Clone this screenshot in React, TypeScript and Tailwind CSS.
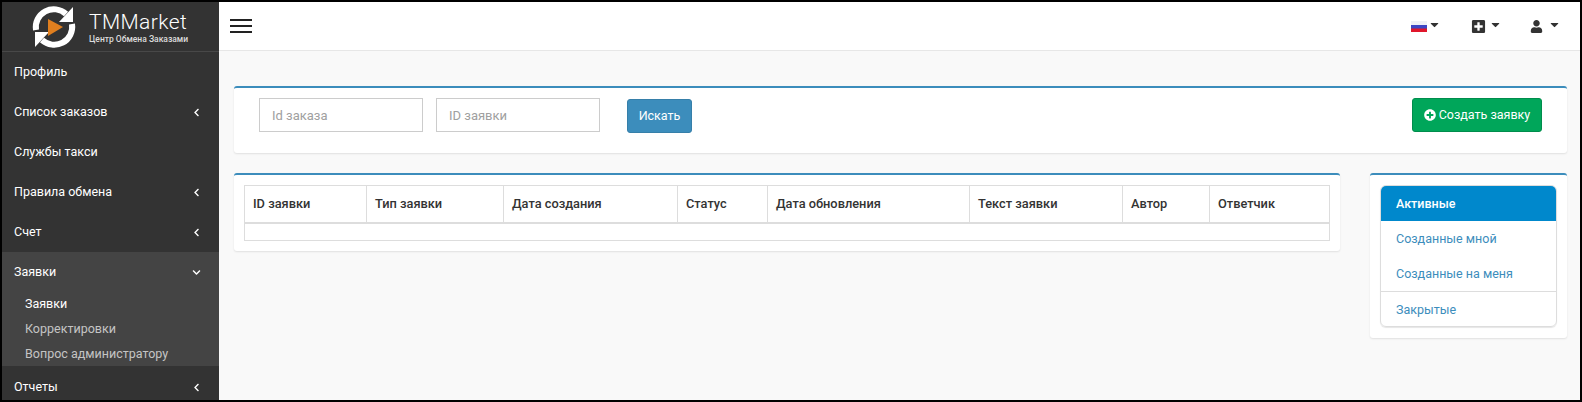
import { FaCaretDown, FaChevronDown, FaChevronLeft, FaPlusCircle, FaPlusSquare, FaUser } from 'react-icons/fa';

const menuTop = ['Профиль', 'Список заказов', 'Службы такси', 'Правила обмена', 'Счет'];
const withArrow = ['Список заказов', 'Правила обмена', 'Счет'];

const columns = [
  { name: 'ID заявки', width: 'w-[122px]' },
  { name: 'Тип заявки', width: 'w-[137px]' },
  { name: 'Дата создания', width: 'w-[174px]' },
  { name: 'Статус', width: 'w-[90px]' },
  { name: 'Дата обновления', width: 'w-[202px]' },
  { name: 'Текст заявки', width: 'w-[153px]' },
  { name: 'Автор', width: 'w-[87px]' },
  { name: 'Ответчик', width: 'w-[120px]' },
];

function Logo() {
  return (
    <svg viewBox="0 0 44 44" className="h-[44px] w-[44px] shrink-0">
      <path d="M4 25 A18 18 0 0 1 34 9" fill="none" stroke="#fff" strokeWidth="6" />
      <path d="M41 2 V17 H27 Z" fill="#fff" />
      <path d="M40 19 A18 18 0 0 1 10 35" fill="none" stroke="#fff" strokeWidth="6" />
      <path d="M3 42 V27 H17 Z" fill="#fff" />
      <path d="M16 14 L31 22 L16 31 Z" fill="#e07f1f" />
    </svg>
  );
}

function Flag() {
  return (
    <svg viewBox="0 0 16 11" className="h-[11px] w-[16px]">
      <rect width="16" height="4" fill="#eef0f6" />
      <rect y="4" width="16" height="4" fill="#3b46c4" />
      <rect y="7.5" width="16" height="3.5" fill="#e0162b" />
    </svg>
  );
}

function MenuItem({ label }: { label: string }) {
  return (
    <div className="flex h-10 shrink-0 items-center justify-between pl-[12px] pr-[18px] text-white">
      <span>{label}</span>
      {withArrow.includes(label) && <FaChevronLeft className="text-[9px]" />}
    </div>
  );
}

export default function App() {
  return (
    <div className="flex h-screen overflow-hidden border-2 border-black bg-[#f9f9f9] font-['Roboto',sans-serif] text-[12.5px] text-[#333]">
      <aside className="flex w-[217px] shrink-0 flex-col overflow-hidden bg-[#333]">
        <div className="flex h-[50px] shrink-0 items-center gap-[13px] border-b border-[#484848] pl-[30px]">
          <Logo />
          <div className="flex flex-col text-white">
            <span className="text-[21px] font-light leading-[24px] tracking-[0.4px]">TMMarket</span>
            <span className="text-[8.5px] font-medium leading-[10px] text-[#ddd]">Центр Обмена Заказами</span>
          </div>
        </div>
        {menuTop.map((label) => (
          <MenuItem key={label} label={label} />
        ))}
        <div className="flex h-[114px] shrink-0 flex-col bg-[#444]">
          <div className="flex h-10 shrink-0 items-center justify-between pl-[12px] pr-[18px] text-white">
            <span>Заявки</span>
            <FaChevronDown className="text-[9px]" />
          </div>
          <div className="-mt-[1px] flex flex-col pl-[23px] leading-[25px] text-[#c4c4c4]">
            <span className="text-white">Заявки</span>
            <span>Корректировки</span>
            <span>Вопрос администратору</span>
          </div>
        </div>
        <div className="flex h-[42px] shrink-0 items-center justify-between pl-[12px] pr-[18px] text-white">
          <span>Отчеты</span>
          <FaChevronLeft className="text-[9px]" />
        </div>
      </aside>

      <main className="flex min-w-0 flex-1 flex-col">
        <header className="flex h-[49px] shrink-0 items-center justify-between border-b border-[#e7e7e7] bg-white pl-[11px] pr-[19px]">
          <div className="flex w-[22px] flex-col gap-[4px]">
            <span className="h-[2px] bg-[#222]" />
            <span className="h-[2px] bg-[#222]" />
            <span className="h-[2px] bg-[#222]" />
          </div>
          <div className="flex items-center text-[#333]">
            <div className="flex items-center gap-[1px]">
              <Flag />
              <FaCaretDown className="mb-[3px] text-[13px]" />
            </div>
            <div className="ml-[30px] flex items-center gap-[3px]">
              <FaPlusSquare className="text-[15px]" />
              <FaCaretDown className="mb-[3px] text-[13px]" />
            </div>
            <div className="ml-[28px] flex items-center gap-[5px]">
              <FaUser className="text-[13px]" />
              <FaCaretDown className="mb-[3px] text-[13px]" />
            </div>
          </div>
        </header>

        <div className="flex flex-col gap-[20px] pl-[15px] pr-[13px] pt-[35px]">
          <section className="flex h-[67px] items-start justify-between rounded-[3px] border-t-2 border-[#3c8dbc] bg-white pl-[25px] pr-[25px] pt-[10px] shadow-[0_1px_2px_rgba(0,0,0,0.1)]">
            <div className="flex items-start">
              <input
                placeholder="Id заказа"
                className="h-[34px] w-[164px] border border-[#ccc] px-[12px] text-[13px] placeholder:text-[#a0a0a0]"
              />
              <input
                placeholder="ID заявки"
                className="ml-[13px] h-[34px] w-[164px] border border-[#ccc] px-[12px] text-[13px] placeholder:text-[#a0a0a0]"
              />
              <button className="ml-[27px] mt-[1px] h-[34px] w-[65px] rounded-[3px] border border-[#367fa9] bg-[#3c8dbc] text-[12.5px] text-white">
                Искать
              </button>
            </div>
            <button className="flex h-[34px] w-[130px] items-center justify-center gap-[3px] rounded-[3px] border border-[#008d4c] bg-[#00a65a] text-[12.5px] text-white">
              <FaPlusCircle className="text-[12px]" />
              Создать заявку
            </button>
          </section>

          <div className="flex items-start justify-between">
            <section className="h-[78px] w-[1106px] rounded-[3px] border-t-2 border-[#3c8dbc] bg-white px-[10px] pt-[10px] shadow-[0_1px_2px_rgba(0,0,0,0.1)]">
              <table className="w-[1085px] table-fixed border-collapse">
                <thead>
                  <tr>
                    {columns.map((col) => (
                      <th
                        key={col.name}
                        className={`${col.width} h-[37px] border border-b-2 border-[#ddd] px-[8px] text-left text-[12.8px] font-medium`}
                      >
                        {col.name}
                      </th>
                    ))}
                  </tr>
                </thead>
                <tbody>
                  <tr>
                    <td colSpan={8} className="h-[18px] border border-[#ddd]" />
                  </tr>
                </tbody>
              </table>
            </section>

            <section className="h-[165px] w-[197px] rounded-[3px] border-t-2 border-[#3c8dbc] bg-white px-[10px] pt-[10px] shadow-[0_1px_2px_rgba(0,0,0,0.1)]">
              <nav className="flex h-[142px] flex-col overflow-hidden rounded-[6px] border border-[#ddd] text-[#3c8dbc] shadow-[0_1px_1px_rgba(0,0,0,0.1)]">
                <div className="flex h-[35px] shrink-0 items-center bg-[#0088cc] pl-[15px] pt-[1px] font-medium text-white">Активные</div>
                <div className="flex h-[35px] shrink-0 items-center pl-[15px] pt-[1px]">Созданные мной</div>
                <div className="flex h-[36px] shrink-0 items-center border-b border-[#ddd] pl-[15px] pt-[1px]">Созданные на меня</div>
                <div className="flex h-[35px] shrink-0 items-center pl-[15px] pt-[1px]">Закрытые</div>
              </nav>
            </section>
          </div>
        </div>
      </main>
    </div>
  );
}
